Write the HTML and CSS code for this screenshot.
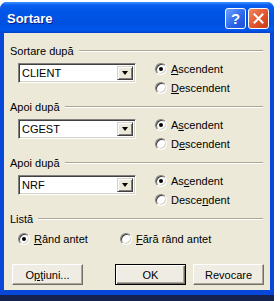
FILE: index.html
```html
<!DOCTYPE html>
<html lang="ro">
<head>
  <meta charset="UTF-8">
  <title>Sortare</title>
  <link rel="stylesheet" href="styles.css">
</head>
<body>

  <div class="window">
    <div class="titlebar">
      <span class="title">Sortare</span>
      <div class="caption-buttons">
        <span class="cap-btn help">?</span>
        <span class="cap-btn close">
          <svg width="11" height="11" viewBox="0 0 11 11"><path d="M1.5 1.5 L9.5 9.5 M9.5 1.5 L1.5 9.5" stroke="#fff" stroke-width="2" stroke-linecap="square"/></svg>
        </span>
      </div>
    </div>

    <div class="client">
      <!-- Cheia 1 -->
      <div class="group">
        <div class="group-header"><span>Sortare după</span></div>
        <div class="group-body">
          <div class="combo"><span class="combo-text">CLIENT</span><span class="combo-arrow"></span></div>
          <div class="radios">
            <label class="radio"><span class="dot checked"></span><span><u>A</u>scendent</span></label>
            <label class="radio"><span class="dot"></span><span><u>D</u>escendent</span></label>
          </div>
        </div>
      </div>

      <!-- Cheia 2 -->
      <div class="group">
        <div class="group-header"><span>Apoi după</span></div>
        <div class="group-body">
          <div class="combo"><span class="combo-text">CGEST</span><span class="combo-arrow"></span></div>
          <div class="radios">
            <label class="radio"><span class="dot checked"></span><span>A<u>s</u>cendent</span></label>
            <label class="radio"><span class="dot"></span><span>D<u>e</u>scendent</span></label>
          </div>
        </div>
      </div>

      <!-- Cheia 3 -->
      <div class="group">
        <div class="group-header"><span>Apoi după</span></div>
        <div class="group-body">
          <div class="combo"><span class="combo-text">NRF</span><span class="combo-arrow"></span></div>
          <div class="radios">
            <label class="radio"><span class="dot checked"></span><span>As<u>c</u>endent</span></label>
            <label class="radio"><span class="dot"></span><span>Desce<u>n</u>dent</span></label>
          </div>
        </div>
      </div>

      <!-- Lista -->
      <div class="group">
        <div class="group-header"><span>Listă</span></div>
        <div class="list-options">
          <label class="radio first"><span class="dot checked"></span><span><u>R</u>ând antet</span></label>
          <label class="radio"><span class="dot"></span><span><u>F</u>ără rând antet</span></label>
        </div>
      </div>

      <!-- Butoane -->
      <div class="buttons">
        <button class="btn">O<u>p</u>ţiuni...</button>
        <button class="btn default">OK</button>
        <button class="btn">Revocare</button>
      </div>
    </div>
  </div>
  <div class="desk"></div>

</body>
</html>
```

FILE: styles.css
```css
body {
  margin: 0;
  background: #ffffff;
  font-family: 'Liberation Sans', Arial, sans-serif;
  font-size: 11px;
  color: #000;
}

.window {
  width: 274px;
  height: 293px;
  margin-top: 2px;
  background: #0848d8;
  border-radius: 7px 7px 0 0;
  display: flex;
  flex-direction: column;
  padding: 0 4px 5px 4px;
  box-sizing: border-box;
}

.desk {
  height: 6px;
  width: 274px;
  background: #15224e;
}

.titlebar {
  height: 31px;
  margin: 0 -4px;
  padding: 0 5px 0 7px;
  border-radius: 7px 7px 0 0;
  background: linear-gradient(to bottom, #3d95ff 0, #0a5ff0 3px, #0055e8 10px, #0050e0 22px, #0058ee 28px, #0040c8 31px);
  display: flex;
  align-items: center;
  justify-content: space-between;
}

.title {
  color: #fff;
  font-weight: bold;
  font-size: 13px;
  text-shadow: 1px 1px #0a1e8c;
  margin-top: 2px;
}

.caption-buttons {
  display: flex;
  gap: 2px;
  margin-top: 2px;
}

.cap-btn {
  width: 21px;
  height: 21px;
  box-sizing: border-box;
  border: 1px solid #fff;
  border-radius: 3px;
  display: flex;
  align-items: center;
  justify-content: center;
  color: #fff;
}

.help {
  background: linear-gradient(135deg, #6fa2ff, #2a63e8 60%, #1f4fd0);
  font: bold 15px 'Liberation Sans', sans-serif;
}

.close {
  background: linear-gradient(135deg, #f08a66, #e2532c 55%, #c63a18);
}

.client {
  flex: 1;
  background: #ece9d8;
  padding: 11px 6px 0 6px;
}

.group {
  margin-bottom: 3px;
}

.group-header {
  display: flex;
  align-items: center;
  height: 13px;
}

.group-header::after {
  content: "";
  flex: 1;
  margin: 1px 1px 0 5px;
  border-top: 1px solid #aca899;
  border-bottom: 1px solid #fff;
}

.group-body {
  display: flex;
  align-items: flex-start;
  height: 40px;
}

.combo {
  margin: 6px 0 0 8px;
  width: 118px;
  height: 20px;
  box-sizing: border-box;
  background: #fff;
  border: 1px solid;
  border-color: #808080 #fff #fff #808080;
  box-shadow: inset 1px 1px #404040, inset -1px -1px #d4d0c8;
  display: flex;
  align-items: center;
  padding: 2px;
}

.combo-text {
  flex: 1;
  padding-left: 1px;
}

.combo-arrow {
  width: 16px;
  height: 14px;
  box-sizing: border-box;
  background: #ece9d8;
  border: 1px solid;
  border-color: #d4d0c8 #404040 #404040 #d4d0c8;
  box-shadow: inset 1px 1px #fff, inset -1px -1px #808080;
  position: relative;
}

.combo-arrow::after {
  content: "";
  position: absolute;
  left: 4px;
  top: 4px;
  border-left: 3.5px solid transparent;
  border-right: 3.5px solid transparent;
  border-top: 4px solid #000;
}

.radios {
  margin: 2px 0 0 19px;
}

.radio {
  display: flex;
  align-items: center;
  height: 19px;
}

.dot {
  width: 12px;
  height: 12px;
  box-sizing: border-box;
  border-radius: 50%;
  background: #fff;
  border: 1px solid;
  border-color: #808080 #fff #fff #808080;
  box-shadow: inset 1px 1px #404040, inset -1px -1px #d4d0c8;
  margin-right: 4px;
  position: relative;
}

.dot.checked::after {
  content: "";
  position: absolute;
  left: 3px;
  top: 3px;
  width: 4px;
  height: 4px;
  border-radius: 50%;
  background: #000;
}

.list-options {
  display: flex;
  margin: 4px 0 0 8px;
}

.list-options .first {
  width: 102px;
}

.buttons {
  display: flex;
  margin-top: 16px;
  padding-left: 2px;
}

.btn {
  width: 71px;
  height: 21px;
  font: 11px 'Liberation Sans', Arial, sans-serif;
  color: #000;
  background: #efede3;
  border: 1px solid;
  border-color: #fff #716f64 #716f64 #fff;
  box-shadow: inset -1px -1px #aca899;
  padding: 0;
  margin-left: 7px;
}

.btn:first-child {
  margin-left: 0;
  margin-right: auto;
}

.btn.default {
  border-color: #000;
  box-shadow: inset 1px 1px #fff, inset -1px -1px #716f64, inset -2px -2px #aca899;
}
```
